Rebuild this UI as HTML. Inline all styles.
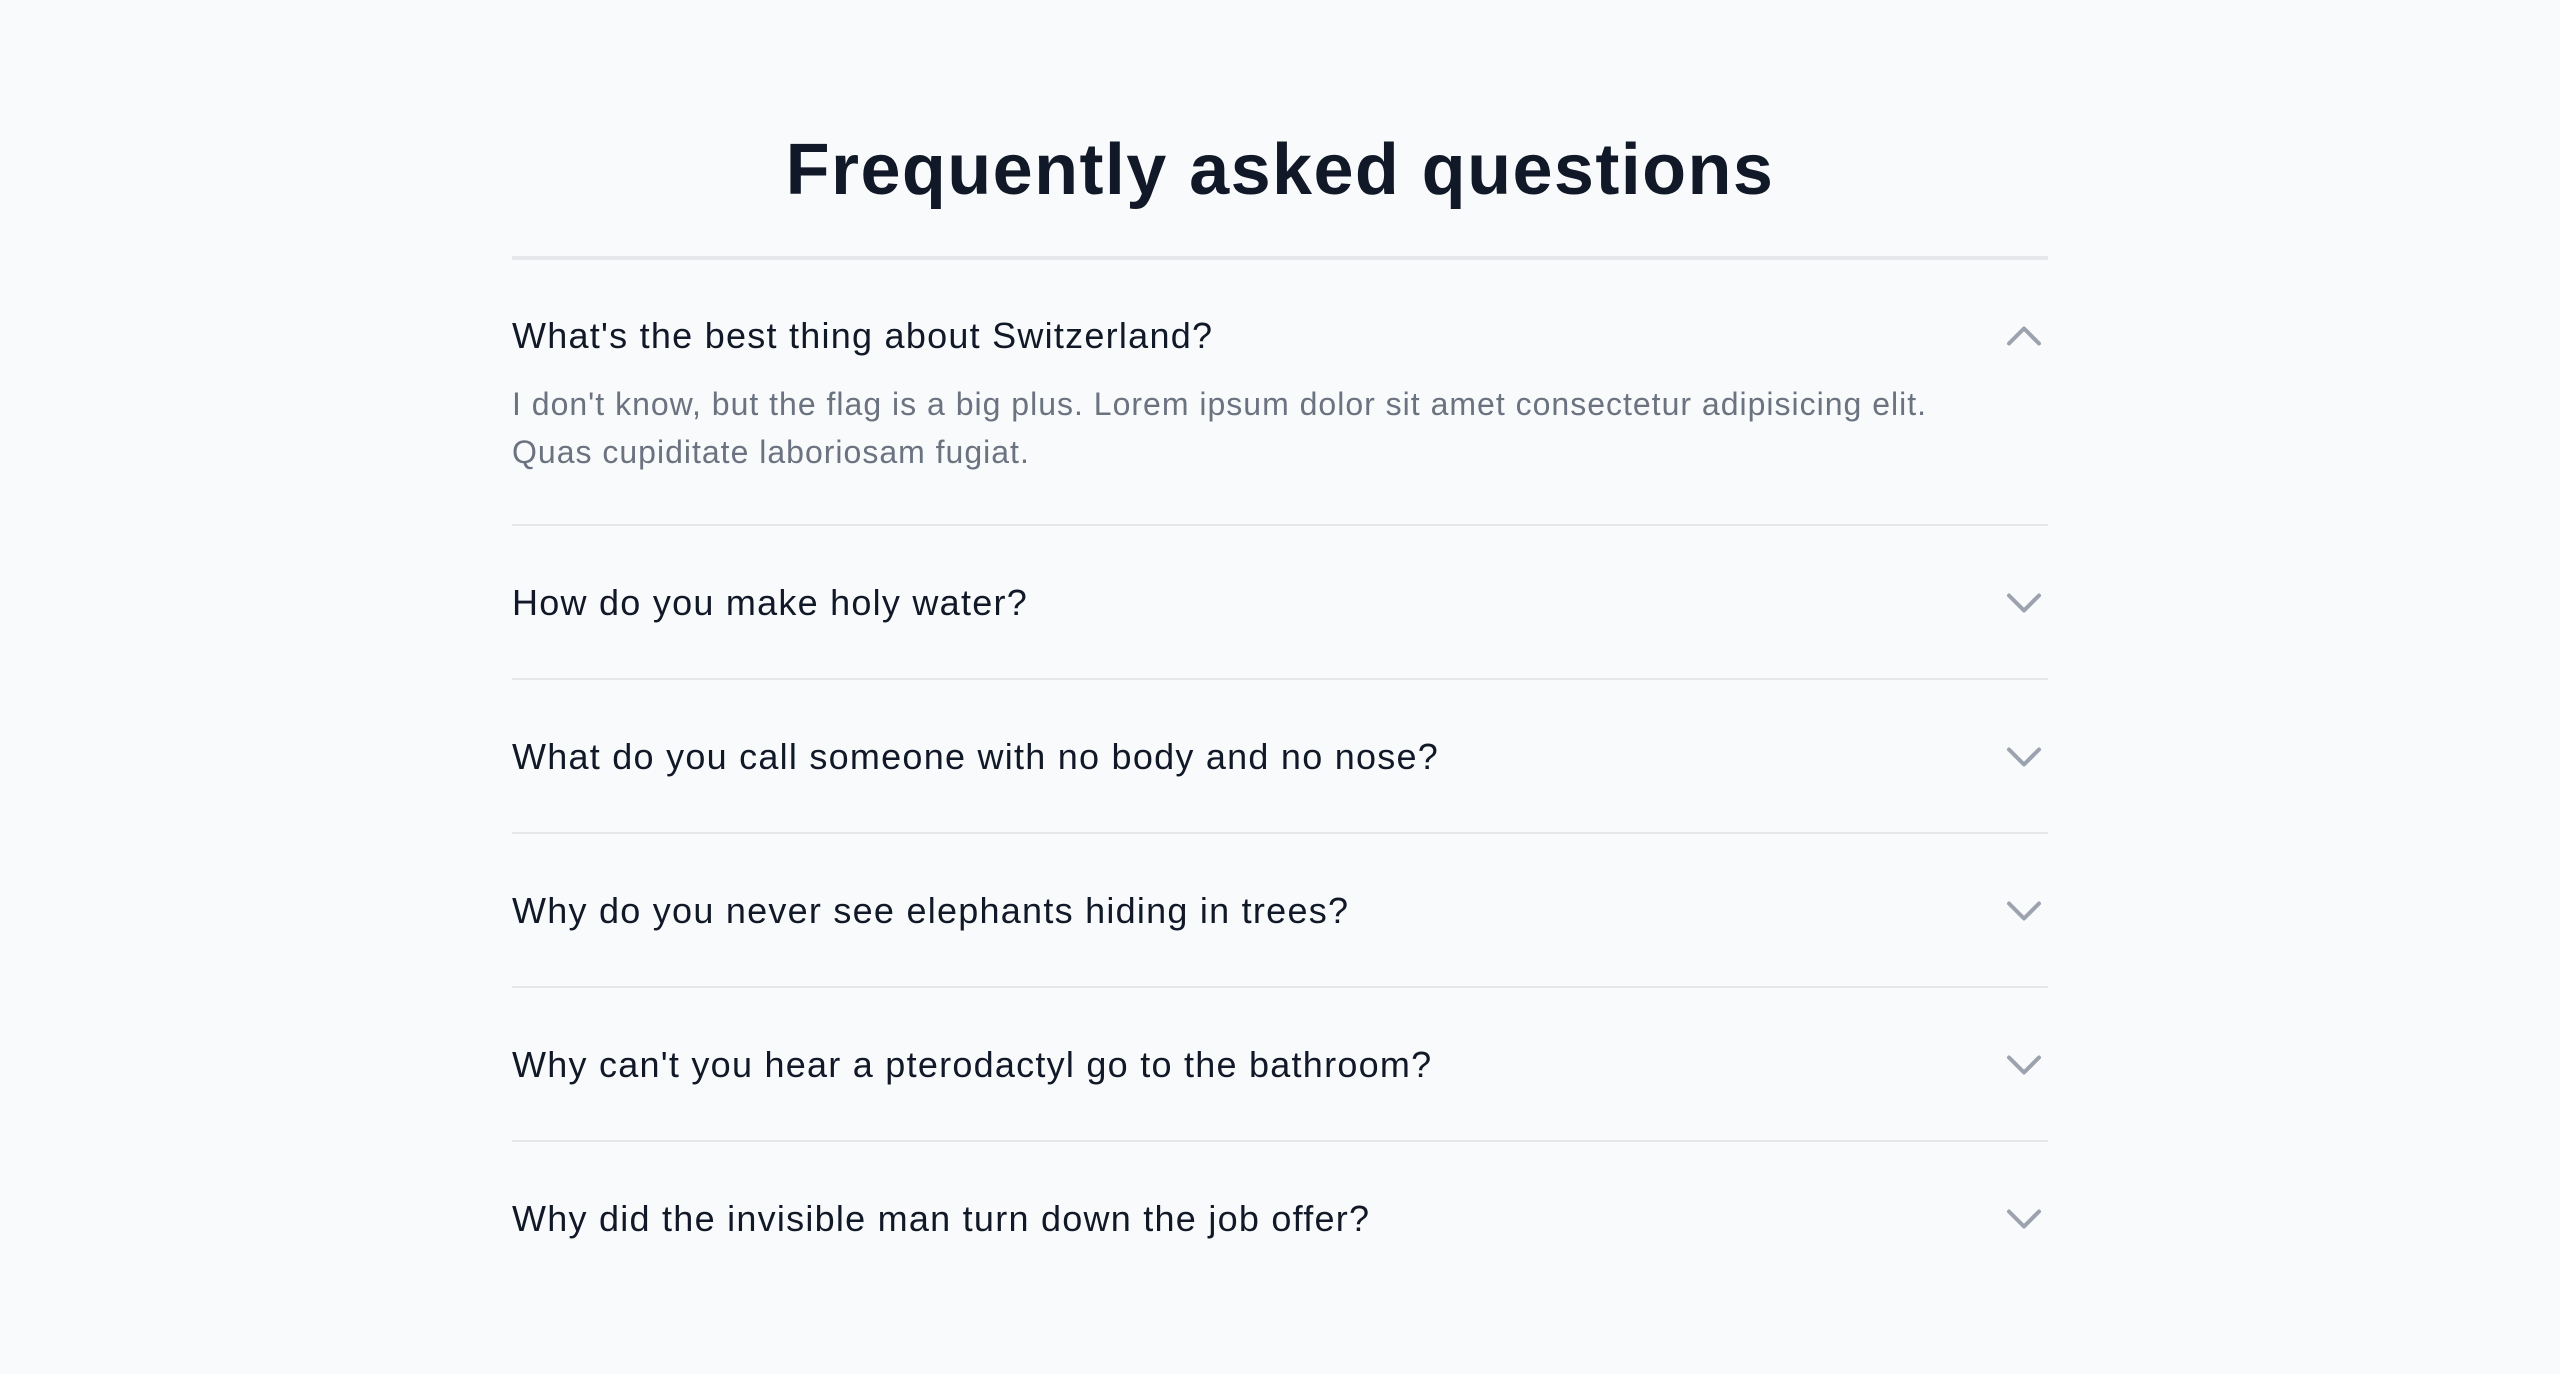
<!DOCTYPE html>
<html><head><meta charset="utf-8"><style>
html,body{margin:0;padding:0;background:#f9fafb;}
body{width:2560px;height:1374px;overflow:hidden;font-family:"Liberation Sans",sans-serif;}
.wrap{position:absolute;left:512px;top:0;width:1536px;}
h1{margin:0;position:absolute;top:130px;left:0;width:1536px;text-align:center;font-size:72px;line-height:80px;font-weight:700;color:#111827;letter-spacing:1.4px;}
.list{position:absolute;top:256px;left:0;width:1536px;border-top:4px solid #e5e7eb;}
.item{padding:49px 0 47px;border-bottom:2px solid #e5e7eb;}
.item:last-child{border-bottom:none;}
.q{position:relative;font-size:36px;line-height:56px;color:#111827;white-space:nowrap;letter-spacing:1.25px;}
.q svg{position:absolute;right:0;top:4px;width:48px;height:48px;}
.a{margin-top:16px;font-size:32px;line-height:48px;color:#6b7280;white-space:nowrap;letter-spacing:1px;}
</style></head><body>
<div class="wrap">
<h1>Frequently asked questions</h1>
<div class="list">
<div class="item" style="padding-top:48px;padding-bottom:48px"><div class="q">What's the best thing about Switzerland?<svg viewBox="0 0 24 24" fill="none" stroke="#9ca3af" stroke-width="2" stroke-linecap="round" stroke-linejoin="round"><path d="M4.5 15.75l7.5-7.5 7.5 7.5"/></svg></div>
<div class="a">I don't know, but the flag is a big plus. Lorem ipsum dolor sit amet consectetur adipisicing elit.<br>Quas cupiditate laboriosam fugiat.</div></div>
<div class="item"><div class="q">How do you make holy water?<svg viewBox="0 0 24 24" fill="none" stroke="#9ca3af" stroke-width="2" stroke-linecap="round" stroke-linejoin="round"><path d="M19.5 8.25l-7.5 7.5-7.5-7.5"/></svg></div></div>
<div class="item"><div class="q">What do you call someone with no body and no nose?<svg viewBox="0 0 24 24" fill="none" stroke="#9ca3af" stroke-width="2" stroke-linecap="round" stroke-linejoin="round"><path d="M19.5 8.25l-7.5 7.5-7.5-7.5"/></svg></div></div>
<div class="item"><div class="q">Why do you never see elephants hiding in trees?<svg viewBox="0 0 24 24" fill="none" stroke="#9ca3af" stroke-width="2" stroke-linecap="round" stroke-linejoin="round"><path d="M19.5 8.25l-7.5 7.5-7.5-7.5"/></svg></div></div>
<div class="item"><div class="q">Why can't you hear a pterodactyl go to the bathroom?<svg viewBox="0 0 24 24" fill="none" stroke="#9ca3af" stroke-width="2" stroke-linecap="round" stroke-linejoin="round"><path d="M19.5 8.25l-7.5 7.5-7.5-7.5"/></svg></div></div>
<div class="item"><div class="q">Why did the invisible man turn down the job offer?<svg viewBox="0 0 24 24" fill="none" stroke="#9ca3af" stroke-width="2" stroke-linecap="round" stroke-linejoin="round"><path d="M19.5 8.25l-7.5 7.5-7.5-7.5"/></svg></div></div>
</div>
</div>
</body></html>
